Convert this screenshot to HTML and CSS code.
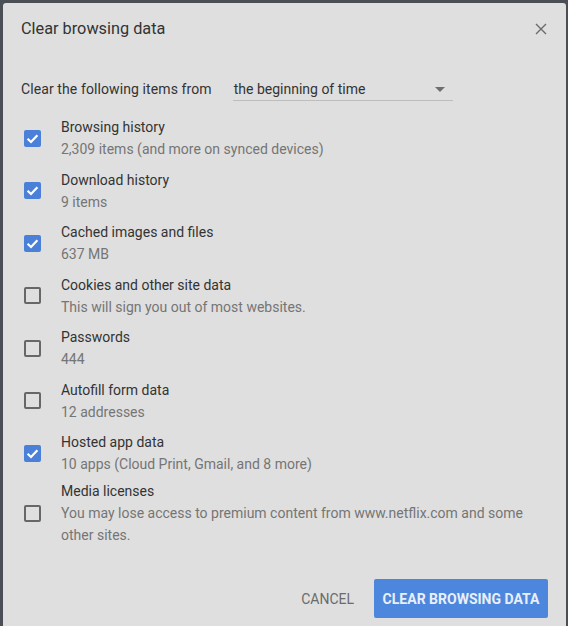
FILE: index.html
```html
<!DOCTYPE html>
<html lang="en">
<head>
<meta charset="utf-8">
<title>Clear browsing data</title>
<link rel="stylesheet" href="styles.css">
</head>
<body>
<div class="dialog">
  <div class="header">
    <h1 class="title">Clear browsing data</h1>
    <button class="close" aria-label="Close">
      <svg width="12" height="12" viewBox="0 0 12 12"><path d="M1 1 L11 11 M11 1 L1 11" stroke="#6b6b6b" stroke-width="1.4" fill="none"/></svg>
    </button>
  </div>
  <div class="range">
    <span class="range-label">Clear the following items from</span>
    <div class="select">
      <span>the beginning of time</span>
      <svg class="arrow" width="10" height="5" viewBox="0 0 10 5"><path d="M0 0 L10 0 L5 5 Z" fill="#6e6e6e"/></svg>
    </div>
  </div>
  <div class="items">
    <div class="item">
      <span class="cb checked"><svg width="17" height="17" viewBox="0 0 17 17"><path d="M3.6 8.8 L7 12 L13.4 5.3" stroke="#fff" stroke-width="2.2" fill="none"/></svg></span>
      <div class="text"><div class="name">Browsing history</div><div class="sub">2,309 items (and more on synced devices)</div></div>
    </div>
    <div class="item">
      <span class="cb checked"><svg width="17" height="17" viewBox="0 0 17 17"><path d="M3.6 8.8 L7 12 L13.4 5.3" stroke="#fff" stroke-width="2.2" fill="none"/></svg></span>
      <div class="text"><div class="name">Download history</div><div class="sub">9 items</div></div>
    </div>
    <div class="item">
      <span class="cb checked"><svg width="17" height="17" viewBox="0 0 17 17"><path d="M3.6 8.8 L7 12 L13.4 5.3" stroke="#fff" stroke-width="2.2" fill="none"/></svg></span>
      <div class="text"><div class="name">Cached images and files</div><div class="sub">637 MB</div></div>
    </div>
    <div class="item">
      <span class="cb"></span>
      <div class="text"><div class="name">Cookies and other site data</div><div class="sub">This will sign you out of most websites.</div></div>
    </div>
    <div class="item">
      <span class="cb"></span>
      <div class="text"><div class="name">Passwords</div><div class="sub">444</div></div>
    </div>
    <div class="item">
      <span class="cb"></span>
      <div class="text"><div class="name">Autofill form data</div><div class="sub">12 addresses</div></div>
    </div>
    <div class="item">
      <span class="cb checked"><svg width="17" height="17" viewBox="0 0 17 17"><path d="M3.6 8.8 L7 12 L13.4 5.3" stroke="#fff" stroke-width="2.2" fill="none"/></svg></span>
      <div class="text"><div class="name">Hosted app data</div><div class="sub">10 apps (Cloud Print, Gmail, and 8 more)</div></div>
    </div>
    <div class="item item-last">
      <span class="cb"></span>
      <div class="text"><div class="name">Media licenses</div><div class="sub">You may lose access to premium content from www.netflix.com and some other sites.</div></div>
    </div>
  </div>
  <div class="actions">
    <button class="btn cancel">CANCEL</button>
    <button class="btn primary">CLEAR BROWSING DATA</button>
  </div>
</div>
</body>
</html>
```
FILE: styles.css
```css
html, body {
  margin: 0;
  padding: 0;
  height: 100%;
}
body {
  background: #4b4e55;
  font-family: Roboto, "Liberation Sans", Arial, sans-serif;
  overflow: hidden;
}
.dialog {
  margin: 3px 2px 0 3px;
  height: 623px;
  background: #dfdfdf;
  border-radius: 3px 3px 0 0;
  box-sizing: border-box;
  padding: 0 18px 0 18px;
  display: flex;
  flex-direction: column;
}
.header {
  display: flex;
  align-items: center;
  justify-content: space-between;
  height: 51px;
}
.title {
  margin: 0;
  font-size: 16.3px;
  font-weight: 400;
  color: #333;
  line-height: 20px;
}
.close {
  border: 0;
  background: none;
  padding: 0;
  margin-right: 1px;
  width: 12px;
  height: 12px;
  display: flex;
}
.range {
  display: flex;
  align-items: center;
  margin-top: 24px;
  height: 22px;
}
.range-label {
  font-size: 14px;
  color: #333;
  letter-spacing: 0.1px;
}
.select {
  margin-left: 21px;
  width: 220px;
  box-sizing: border-box;
  display: flex;
  align-items: center;
  justify-content: space-between;
  font-size: 14px;
  color: #333;
  border-bottom: 1px solid #bdbdbd;
  padding: 1px 8px 3px 1px;
  position: relative;
  top: 1px;
}
.arrow {
  margin-top: 2px;
}
.items {
  margin-top: 16px;
  display: flex;
  flex-direction: column;
  gap: 8.5px;
}
.item {
  display: flex;
  align-items: center;
}
.item-last {
  margin-top: -3.5px;
}
.cb {
  width: 17px;
  height: 17px;
  box-sizing: border-box;
  border: 2px solid #676767;
  border-radius: 2px;
  margin-left: 3px;
  flex: none;
  display: flex;
}
.cb.checked {
  border: 0;
  background: #4a80d8;
}
.text {
  margin-left: 20px;
  font-size: 14px;
  line-height: 22px;
}
.name {
  color: #333;
}
.sub {
  color: #757575;
  max-width: 474px;
}
.actions {
  margin-top: auto;
  margin-bottom: 5px;
  display: flex;
  justify-content: flex-end;
  align-items: center;
  gap: 12px;
  padding-bottom: 3px;
}
.btn {
  font-family: Roboto, "Liberation Sans", Arial, sans-serif;
  font-size: 14px;
  border: 0;
  border-radius: 2px;
  height: 39px;
  padding: 0 8px;
  cursor: pointer;
}
.cancel {
  background: none;
  color: #6b6b6b;
}
.primary {
  background: #4d87dd;
  color: #e9eff9;
  font-weight: 700;
  width: 174px;
}
```
